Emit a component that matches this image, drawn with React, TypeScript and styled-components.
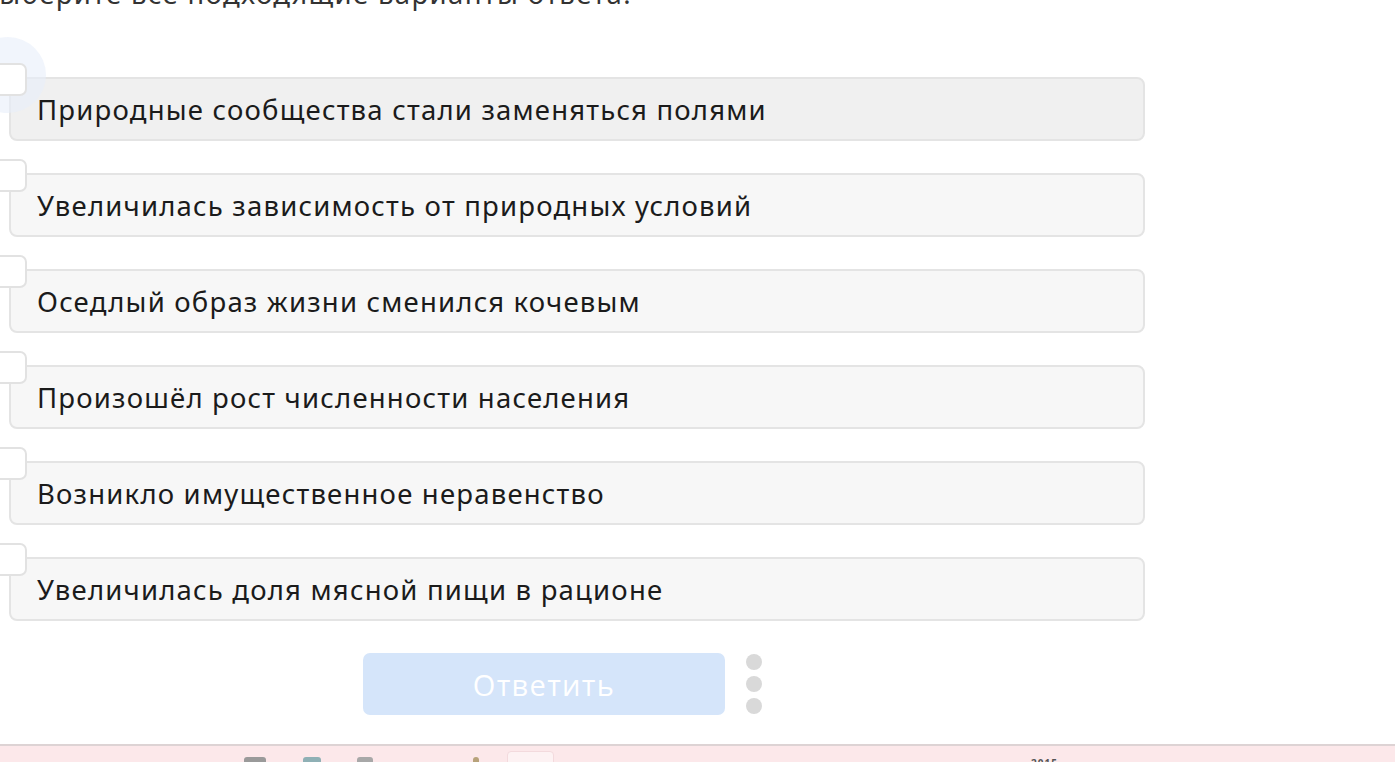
import React, { useState } from "react";
import styled, { createGlobalStyle } from "styled-components";

const GlobalStyle = createGlobalStyle`
  html, body {
    margin: 0;
    padding: 0;
    background: #ffffff;
    overflow: hidden;
  }
  body {
    width: 1395px;
    height: 762px;
    font-family: "Noto Sans", "Liberation Sans", sans-serif;
  }
`;

const Page = styled.div`
  position: relative;
  width: 1395px;
  height: 762px;
  display: flex;
  flex-direction: column;
  overflow: hidden;
`;

const Task = styled.section`
  flex: 1;
  display: flex;
  flex-direction: column;
  padding-left: 9px;
`;

const Prompt = styled.h2`
  margin: -24px 0 0 -29px;
  font-size: 27.5px;
  font-weight: 400;
  line-height: 36px;
  letter-spacing: 1.35px;
  color: #333333;
  white-space: nowrap;
`;

const Options = styled.ul`
  list-style: none;
  margin: 65px 0 0 0;
  padding: 0;
  width: 1136px;
  display: flex;
  flex-direction: column;
  gap: 32px;
`;

const Option = styled.li<{ $hover?: boolean }>`
  position: relative;
  box-sizing: border-box;
  height: 64px;
  display: flex;
  align-items: center;
  padding-left: 26px;
  border: 2px solid #e4e4e4;
  border-radius: 8px;
  background: ${({ $hover }) => ($hover ? "#f0f0f0" : "#f7f7f7")};
  font-size: 27.5px;
  letter-spacing: 1.2px;
  color: #1b1b1b;
  cursor: pointer;
`;

const Label = styled.span`
  position: relative;
  z-index: 2;
`;

// focus ring around the first checkbox
const Halo = styled.span`
  position: absolute;
  left: -41px;
  top: -42px;
  width: 76px;
  height: 76px;
  border-radius: 50%;
  background: #e8effa;
  opacity: 0.6;
`;

const Check = styled.span`
  position: absolute;
  left: -18px;
  top: -16px;
  box-sizing: border-box;
  width: 34px;
  height: 33px;
  border: 2px solid #e2e2e2;
  border-radius: 7px;
  background: #ffffff;
`;

const Actions = styled.div`
  display: flex;
  align-items: center;
  gap: 21px;
  margin: 32px 0 0 354px;
`;

const Submit = styled.button`
  width: 362px;
  height: 62px;
  border: none;
  border-radius: 7px;
  background: #d5e5fa;
  color: #ffffff;
  font-family: "Open Sans", "Liberation Sans", sans-serif;
  font-size: 29px;
  font-weight: 400;
  letter-spacing: 1.3px;
  cursor: default;
`;

const Dots = styled.div`
  display: flex;
  flex-direction: column;
  gap: 6px;
`;

const Dot = styled.span`
  width: 16px;
  height: 16px;
  border-radius: 50%;
  background: #d9d9d9;
`;

const Footer = styled.footer`
  position: relative;
  height: 16px;
  border-top: 2px solid #ddd3d4;
  background: #fce8ea;
`;

const FooterMark = styled.span<{ $left: number; $w: number; $bg: string }>`
  position: absolute;
  top: 11px;
  left: ${({ $left }) => $left}px;
  width: ${({ $w }) => $w}px;
  height: 10px;
  border-radius: 3px;
  background: ${({ $bg }) => $bg};
`;

const FooterTab = styled.span`
  position: absolute;
  left: 507px;
  top: 5px;
  width: 45px;
  height: 20px;
  border: 1px solid #f3dadd;
  border-radius: 4px;
  background: #fdf2f3;
`;

const FooterYear = styled.span`
  position: absolute;
  left: 1031px;
  top: 11px;
  font-size: 10px;
  line-height: 12px;
  font-weight: 700;
  color: #555;
  letter-spacing: 1px;
`;

const answers = [
  "Природные сообщества стали заменяться полями",
  "Увеличилась зависимость от природных условий",
  "Оседлый образ жизни сменился кочевым",
  "Произошёл рост численности населения",
  "Возникло имущественное неравенство",
  "Увеличилась доля мясной пищи в рационе",
];

export default function App() {
  const [picked] = useState<number[]>([]);

  return (
    <Page>
      <GlobalStyle />
      <Task>
        <Prompt>Выберите все подходящие варианты ответа.</Prompt>
        <Options>
          {answers.map((text, i) => (
            <Option key={text} $hover={i === 0}>
              {i === 0 && <Halo />}
              <Check aria-checked={picked.includes(i)} />
              <Label>{text}</Label>
            </Option>
          ))}
        </Options>
        <Actions>
          <Submit disabled>Ответить</Submit>
          <Dots>
            <Dot />
            <Dot />
            <Dot />
          </Dots>
        </Actions>
      </Task>
      <Footer>
        <FooterMark $left={244} $w={22} $bg="#9a9a9a" />
        <FooterMark $left={303} $w={18} $bg="#8fb0b5" />
        <FooterMark $left={357} $w={16} $bg="#a8a8a8" />
        <FooterMark $left={473} $w={6} $bg="#b7a27a" />
        <FooterTab />
        <FooterYear>2015</FooterYear>
      </Footer>
    </Page>
  );
}
